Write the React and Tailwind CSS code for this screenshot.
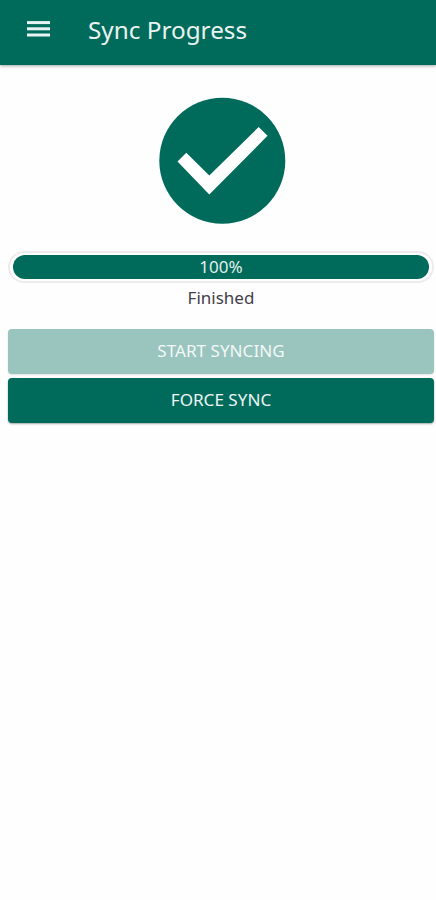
function MenuIcon() {
  return (
    <svg className="ml-[27px] h-[18px] w-[23px] shrink-0" viewBox="0 0 23 18" fill="#e9f3f1" aria-hidden="true">
      <rect x="0" y="1.1" width="23" height="3" />
      <rect x="0" y="7.3" width="23" height="3" />
      <rect x="0" y="13.5" width="23" height="3" />
    </svg>
  );
}

function DoneIcon() {
  return (
    <svg className="ml-[151px] mt-8 block h-[127px] w-[127px]" viewBox="159 97 127 127" aria-hidden="true">
      <circle cx="222.3" cy="160.7" r="63" fill="#006b5b" />
      <path d="M177.5 161.6 186.3 152.7 209.3 175.5 258.7 127 267.5 135.8 209.3 194.4Z" fill="#fff" />
    </svg>
  );
}

export default function App() {
  return (
    <div className="flex h-[900px] w-full flex-col bg-[#fefefe] font-['Noto_Sans','Open_Sans',sans-serif]">
      <header className="flex h-[65px] shrink-0 items-center bg-[#006b5b] pb-[7px] shadow-[0_1px_3px_rgba(0,0,0,0.35)]">
        <MenuIcon />
        <h1 className="ml-[38px] pt-0.5 text-[24.3px] leading-8 text-[#e9f3f1]">Sync Progress</h1>
      </header>
      <main className="flex flex-col pl-2 pr-0.5">
        <DoneIcon />
        <div className="mt-[27px] h-8 rounded-full border-2 border-[#ececee] bg-white px-[3px] py-0.5">
          <div className="flex h-6 items-center justify-center rounded-full bg-[#006b5b] text-[17px] text-[#e4efed]">
            100%
          </div>
        </div>
        <p className="mt-[3px] text-center text-[17px] leading-6 text-[#414149]">Finished</p>
        <button
          disabled
          className="mt-[19px] h-[45px] rounded-sm bg-[#9ac4be] pb-0.5 text-[17.1px] leading-6 text-[#f2f8f7] shadow-[0_1px_2px_rgba(0,0,0,0.12)]"
        >
          START SYNCING
        </button>
        <button className="mt-1 h-[45px] rounded-sm bg-[#006b5b] pb-0.5 text-[17.1px] leading-6 text-[#edf5f4] shadow-[0_1px_2px_rgba(0,0,0,0.35)]">
          FORCE SYNC
        </button>
      </main>
    </div>
  );
}
